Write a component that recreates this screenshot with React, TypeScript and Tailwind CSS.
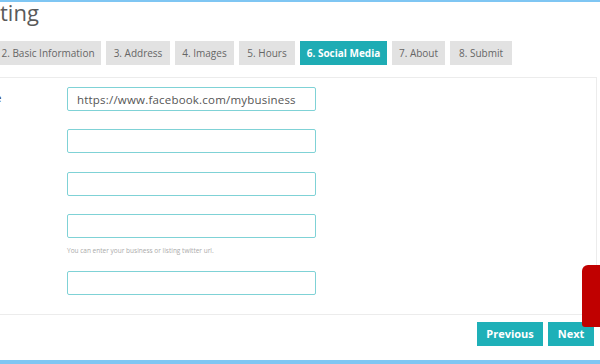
import React from "react";

const tabs = [
  { label: "2. Basic Information", w: "w-[106px]" },
  { label: "3. Address", w: "w-[64px]" },
  { label: "4. Images", w: "w-[59px]" },
  { label: "5. Hours", w: "w-[56px]" },
  { label: "6. Social Media", w: "w-[87px]", active: true },
  { label: "7. About", w: "w-[53px]" },
  { label: "8. Submit", w: "w-[62px]" },
];

function Field({ value, mt }: { value?: string; mt: string }) {
  return (
    <div className={`flex ${mt}`}>
      <div className="w-[67px] shrink-0" />
      <input
        readOnly
        value={value ?? ""}
        className="w-[249px] h-[24px] border border-[#7fd2d6] rounded-[2px] px-[9px] text-[11.5px] tracking-[0.2px] text-[#555] outline-none bg-white"
      />
    </div>
  );
}

export default function App() {
  return (
    <div className="relative w-[600px] h-[364px] overflow-hidden bg-white border-t-2 border-[#7fc6f3] font-['Open_Sans',sans-serif]">
      {/* page title, cut off on the left */}
      <h1 className="h-[39px] pt-[1px] text-[22px] leading-[18px] text-[#5a5a5a]">
        ting
      </h1>

      {/* wizard steps */}
      <div className="flex gap-[5px] -ml-[5px] h-[24px]">
        {tabs.map((t) => (
          <div
            key={t.label}
            className={`${t.w} shrink-0 flex items-center justify-center text-[10px] ${
              t.active ? "bg-[#1eacb4] text-white font-bold" : "bg-[#e2e2e2] text-[#666]"
            }`}
          >
            {t.label}
          </div>
        ))}
      </div>

      {/* form panel */}
      <div className="mt-[12px] w-[597px] h-[238px] border-t border-r border-b border-[#ececec] pt-[9px]">
        <div className="relative">
          <span className="absolute -left-[5px] top-[3px] text-[11px] font-semibold text-[#444]">e</span>
          <Field value="https://www.facebook.com/mybusiness" mt="mt-0" />
        </div>
        <Field mt="mt-[18px]" />
        <Field mt="mt-[19px]" />
        <Field mt="mt-[18px]" />
        <p className="ml-[67px] mt-[9px] text-[6.5px] leading-[8px] text-[#aaa]">
          You can enter your business or listing twitter url.
        </p>
        <Field mt="mt-[16px]" />
      </div>

      {/* navigation */}
      <div className="flex justify-end gap-[5px] pr-[6px] mt-[7px]">
        <button className="w-[66px] h-[24px] bg-[#1eb0b8] text-white text-[11px] font-bold">
          Previous
        </button>
        <button className="w-[46px] h-[24px] bg-[#1eb0b8] text-white text-[11px] font-bold">
          Next
        </button>
      </div>

      {/* feedback tab overlay */}
      <div className="absolute right-0 top-[263px] w-[18px] h-[62px] bg-[#c00000] rounded-tl-[6px] rounded-bl-[3px]" />

      <div className="absolute left-0 right-0 bottom-0 h-[4px] bg-[#7fc6f3]" />
    </div>
  );
}
